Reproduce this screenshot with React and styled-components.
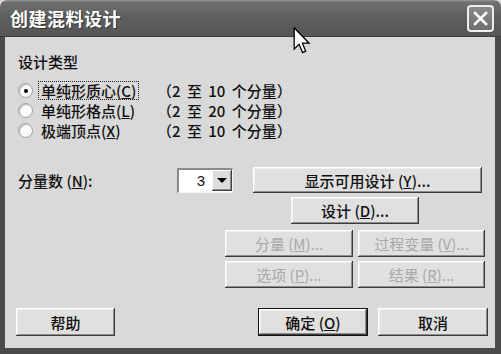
import React from 'react'
import styled, {createGlobalStyle} from 'styled-components'

const Global = createGlobalStyle`
  html, body {
    margin: 0;
    padding: 0;
    background: #d9d9d9;
  }
  body {
    font-family: "Noto Sans CJK SC", "Liberation Sans", sans-serif;
    color: #111;
  }
`;

const Window = styled.div`
  position: relative;
  width: 501px;
  height: 354px;
  display: flex;
  flex-direction: column;
  background: #d9d9d9;
  overflow: hidden;
`;

const TitleBar = styled.div`
  height: 37px;
  flex: none;
  display: flex;
  align-items: center;
  justify-content: space-between;
  padding: 0 7px 0 10px;
  box-sizing: border-box;
  border-radius: 7px 7px 0 0;
  background: linear-gradient(#9a9a9a 0, #707070 2px, #5f5f5f 45%, #565656 100%);
  border-bottom: 1px solid #3e3e3e;
`;

const Title = styled.span`
  color: #fff;
  font-size: 18px;
  font-weight: 700;
  letter-spacing: 0.5px;
  text-shadow: 1px 1px 0 #333;
`;

const CloseButton = styled.div`
  width: 27px;
  height: 27px;
  box-sizing: border-box;
  border: 2px solid #eeeeee;
  border-radius: 4px;
  background: linear-gradient(#8a8a8a, #6e6e6e);
  display: flex;
  align-items: center;
  justify-content: center;
`;

const Body = styled.div`
  flex: 1;
  display: flex;
  flex-direction: column;
  border-left: 5px solid #4a4a4a;
  border-right: 6px solid #4a4a4a;
  border-bottom: 6px solid #4a4a4a;
  padding: 15px 7px 12px 13px;
  font-size: 15px;
`;

const GroupLabel = styled.div`
  height: 20px;
  line-height: 20px;
  font-weight: 500;
`;

const RadioList = styled.div`
  margin-top: 8px;
  display: flex;
  flex-direction: column;
`;

const RadioRow = styled.div`
  height: 20px;
  display: grid;
  grid-template-columns: 22px 122px auto;
  align-items: center;
`;

const RadioCircle = styled.span`
  width: 13px;
  height: 13px;
  border-radius: 50%;
  background: #fafafa;
  border: 1px solid #a0a0a0;
  box-shadow: inset 1px 1px 1px #b8b8b8;
  display: flex;
  align-items: center;
  justify-content: center;

  &::after {
    content: '';
    width: 4px;
    height: 4px;
    border-radius: 50%;
    background: ${p => (p.$checked ? '#000' : 'transparent')};
  }
`;

const RadioLabel = styled.span`
  justify-self: start;
  margin-left: -2px;
  padding: 0 2px;
  line-height: 17px;
  border: 1px dotted ${p => (p.$focused ? '#222' : 'transparent')};
  font-weight: 500;
  white-space: nowrap;
`;

const Range = styled.span`
  margin-left: -5px;
  font-weight: 500;
  word-spacing: 3px;
  white-space: nowrap;
`;

const ControlRow = styled.div`
  display: flex;
  align-items: center;
  height: ${p => p.$h || 27}px;
  margin-top: ${p => p.$gap || 0}px;
  padding-left: ${p => p.$indent || 0}px;
  gap: ${p => p.$spacing || 5}px;
`;

const FieldLabel = styled.span`
  width: 154px;
  font-weight: 500;
`;

const Combo = styled.div`
  width: 56px;
  height: 25px;
  box-sizing: border-box;
  margin-right: 15px;
  display: flex;
  align-items: center;
  background: #fff;
  border-top: 2px solid #8a8a8a;
  border-left: 2px solid #8a8a8a;
  border-right: 1px solid #f4f4f4;
  border-bottom: 1px solid #f4f4f4;
`;

const ComboValue = styled.span`
  flex: 1;
  text-align: right;
  padding-right: 7px;
  font-family: "Liberation Sans", sans-serif;
  font-size: 15px;
`;

const ComboArrow = styled.span`
  width: 20px;
  height: 21px;
  box-sizing: border-box;
  background: #dcdcdc;
  box-shadow: inset -1px -1px #404040, inset 1px 1px #fff, inset -2px -2px #8a8a8a;
  display: flex;
  align-items: center;
  justify-content: center;

  &::after {
    content: '';
    border-left: 5px solid transparent;
    border-right: 5px solid transparent;
    border-top: 5px solid #000;
  }
`;

const Button = styled.div`
  width: ${p => p.$w}px;
  height: ${p => p.$h || 27}px;
  box-sizing: border-box;
  display: flex;
  align-items: center;
  justify-content: center;
  background: #e0e0e0;
  color: ${p => (p.$disabled ? '#a9a9a9' : '#111')};
  font-weight: ${p => (p.$disabled ? 400 : 500)};
  white-space: pre;
  border: ${p => (p.$default ? '1px solid #111' : 'none')};
  box-shadow: inset -1px -1px #3c3c3c, inset 1px 1px #fff, inset -2px -2px #8c8c8c,
    inset 2px 2px #f0f0f0;
`;

const FooterRow = styled.div`
  margin-top: 20px;
  height: 28px;
  display: flex;
  align-items: center;
  gap: 10px;
  margin-left: -2px;
`;

const Spacer = styled.div`
  flex: 1;
`;

const Cursor = styled.svg`
  position: absolute;
  left: 293px;
  top: 27px;
`;

const Key = ({k}) => (
  <span>
    (<u>{k}</u>)
  </span>
);

const radios = [
  {label: '单纯形质心', key: 'C', range: '（2 至 10 个分量）', checked: true},
  {label: '单纯形格点', key: 'L', range: '（2 至 20 个分量）'},
  {label: '极端顶点', key: 'X', range: '（2 至 10 个分量）'},
];

const App = () => {
  return (
    <Window>
      <Global />
      <TitleBar>
        <Title>创建混料设计</Title>
        <CloseButton>
          <svg width="15" height="15" viewBox="0 0 15 15">
            <path d="M2 2 L13 13 M13 2 L2 13" stroke="#fff" strokeWidth="2.6" strokeLinecap="square" />
          </svg>
        </CloseButton>
      </TitleBar>
      <Body>
        <GroupLabel>设计类型</GroupLabel>
        <RadioList>
          {radios.map(r => (
            <RadioRow key={r.key}>
              <RadioCircle $checked={r.checked} />
              <RadioLabel $focused={r.checked}>
                {r.label}
                <Key k={r.key} />
              </RadioLabel>
              <Range>{r.range}</Range>
            </RadioRow>
          ))}
        </RadioList>

        <ControlRow $gap={27} $h={26}>
          <FieldLabel>
            分量数 <Key k="N" />:
          </FieldLabel>
          <Combo>
            <ComboValue>3</ComboValue>
            <ComboArrow />
          </Combo>
          <Button $w={229} $h={26}>
            显示可用设计 <Key k="Y" />...
          </Button>
        </ControlRow>
        <ControlRow $gap={4} $indent={273}>
          <Button $w={128}>
            设计 <Key k="D" />...
          </Button>
        </ControlRow>
        <ControlRow $gap={6} $indent={207}>
          <Button $w={128} $disabled>
            分量 <Key k="M" />...
          </Button>
          <Button $w={127} $disabled>
            过程变量 <Key k="V" />...
          </Button>
        </ControlRow>
        <ControlRow $gap={4} $indent={207}>
          <Button $w={128} $disabled>
            选项 <Key k="P" />...
          </Button>
          <Button $w={127} $disabled>
            结果 <Key k="R" />...
          </Button>
        </ControlRow>

        <FooterRow>
          <Button $w={99} $h={28}>帮助</Button>
          <Spacer />
          <Button $w={110} $h={28} $default>
            确定 <Key k="O" />
          </Button>
          <Button $w={110} $h={28}>取消</Button>
        </FooterRow>
      </Body>
      <Cursor width="18" height="27" viewBox="0 0 12 19">
        <path
          d="M0.5 0.5 L0.5 15.5 L4 12.2 L6.4 18 L8.6 17 L6.3 11.4 L11 11.4 Z"
          fill="#fff"
          stroke="#000"
          strokeWidth="0.9"
          strokeLinejoin="miter"
        />
      </Cursor>
    </Window>
  )
}

export default App
